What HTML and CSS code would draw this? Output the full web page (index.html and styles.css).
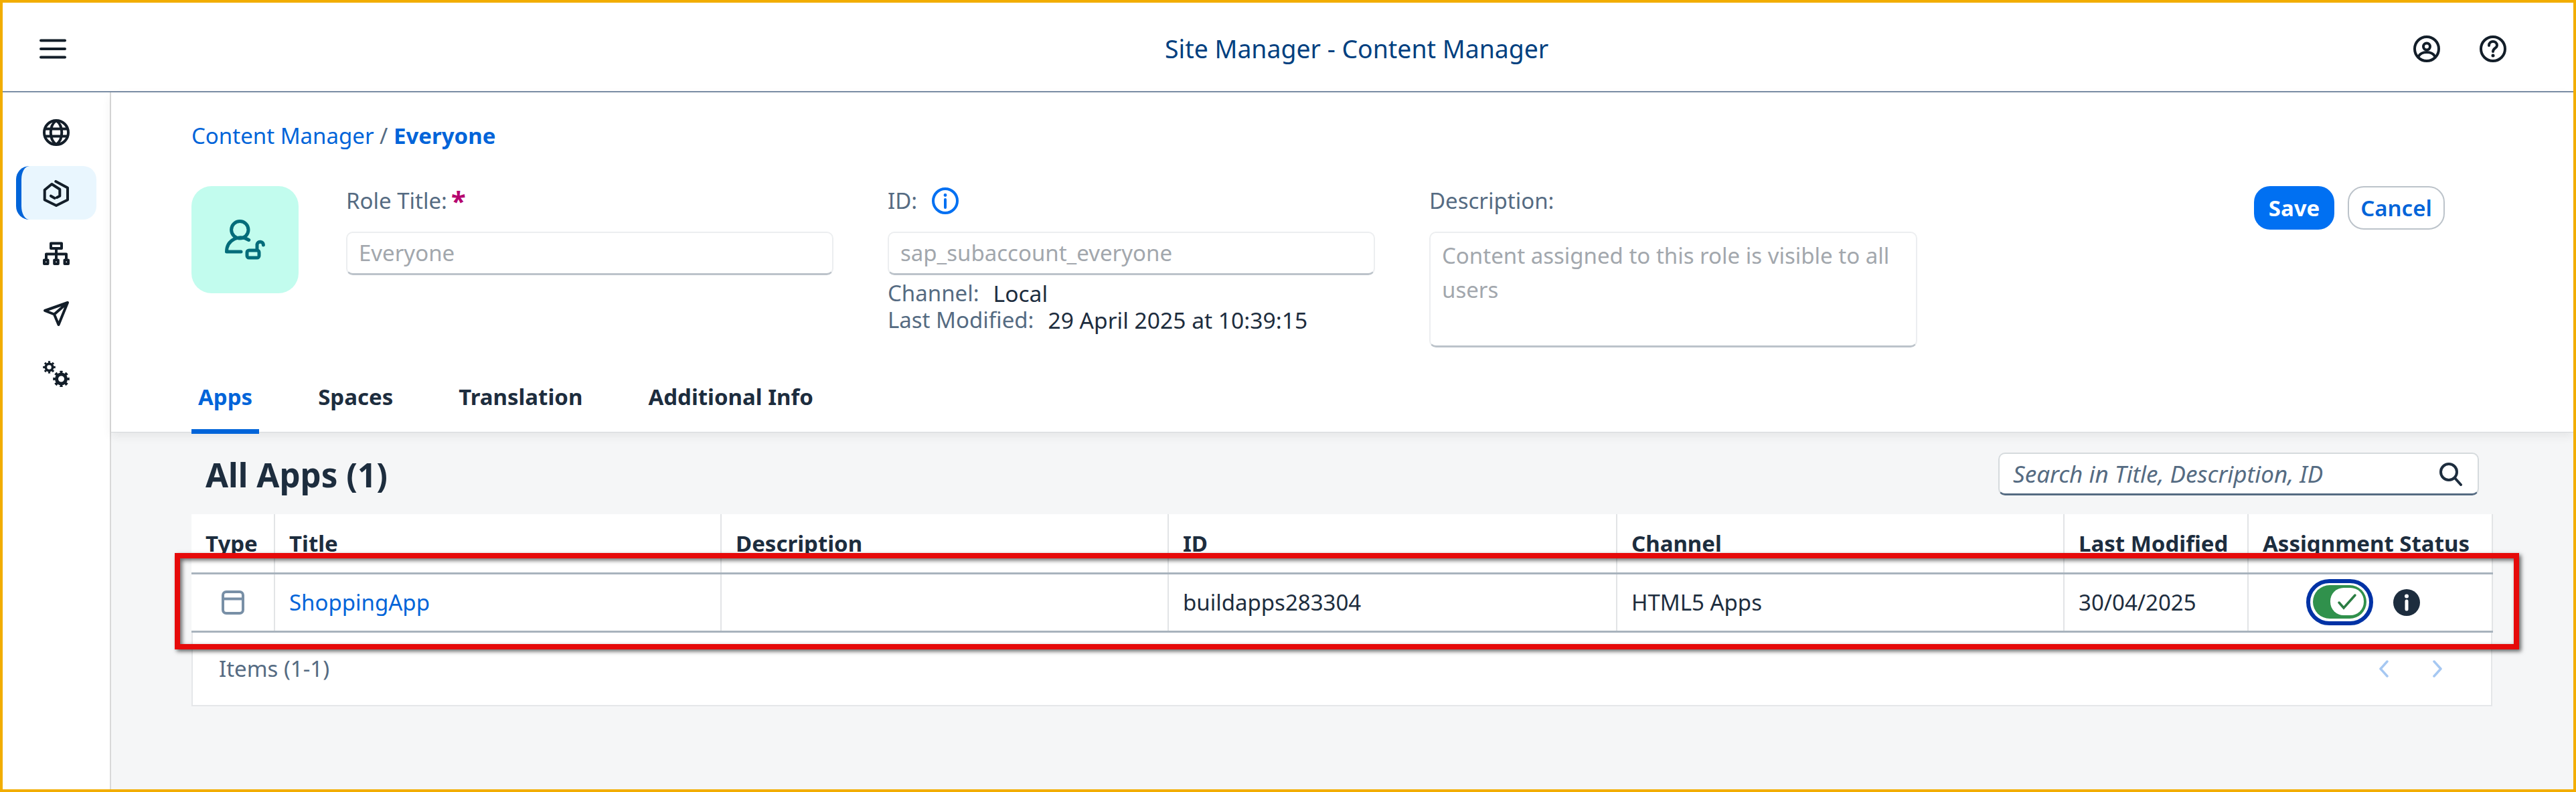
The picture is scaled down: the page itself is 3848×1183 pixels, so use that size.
FILE: index.html

```html
<!DOCTYPE html>
<html lang="en">
<head>
  <meta charset="UTF-8" />
  <title>Site Manager - Content Manager</title>
  <link rel="stylesheet" href="styles.css">
</head>
<body>
  <header class="shell-bar">
    <svg class="icon hamburger" viewBox="0 0 40 30"><path d="M2 2.5H38M2 15H38M2 27.5H38"/></svg>
    <div class="shell-title">Site Manager - Content Manager</div>
    <div class="shell-actions">
      <svg class="icon" viewBox="0 0 40 40"><circle cx="20" cy="20" r="18"/><circle cx="20" cy="16.5" r="5"/><path d="M7.5 31.5C10 27 15 25 20 25S30 27 32.5 31.5"/></svg>
      <svg class="icon" viewBox="0 0 40 40"><circle cx="20" cy="20" r="18"/><path d="M14 15c0-4 3-6 6-6s6 2 6 6c0 4-6 4-6 9"/><circle class="solid" cx="20" cy="30" r="2.5"/></svg>
    </div>
  </header>

  <div class="layout">
    <nav class="side-nav">
      <div class="nav-item">
        <svg class="icon" viewBox="0 0 40 40"><circle cx="20" cy="20" r="18"/><path d="M20 2C9 10 9 30 20 38C31 30 31 10 20 2ZM4 14.5H36M4 25.5H36"/></svg>
      </div>
      <div class="nav-item active">
        <svg class="icon" viewBox="0 0 40 40"><path d="M19.3 2L37 11.5V29.5L20 38L2.7 29.5V14.7L13.3 6L25.3 13.7V23.7L21 26M12 23.7L17.7 27"/></svg>
      </div>
      <div class="nav-item">
        <svg class="icon" viewBox="0 0 40 40"><path d="M12 5.5H28V13H12ZM20 13V29M5 29V21.5H35V29M2 30.5H7.5V36H2ZM17.2 30.5H22.8V36H17.2ZM32.5 30.5H38V36H32.5Z"/></svg>
      </div>
      <div class="nav-item">
        <svg class="icon" viewBox="0 0 40 40"><path d="M3 16L37 4L23.5 37L17 21.5ZM17 21.5L37 4"/></svg>
      </div>
      <div class="nav-item">
        <svg class="icon" viewBox="0 0 40 40">
          <circle class="gear-sm" cx="9.5" cy="10.5" r="5.2"/>
          <circle class="teeth-sm" cx="9.5" cy="10.5" r="7.7" pathLength="16"/>
          <circle class="gear-lg" cx="27.5" cy="28" r="7"/>
          <circle class="teeth-lg" cx="27.5" cy="28" r="10.3" pathLength="16"/>
        </svg>
      </div>
    </nav>

    <main class="main">
      <section class="role-header">
        <div class="breadcrumb">
          <span class="crumb">Content Manager</span><span class="crumb-sep"> / </span><span class="crumb-current">Everyone</span>
        </div>

        <div class="role-form">
          <div class="avatar">
            <svg viewBox="0 0 160 160" width="160" height="160"><circle cx="72.3" cy="65.3" r="12.7"/><path d="M85.7 80.5C78 76 70 76 64 79C56 83 52.5 90 52.5 98H74"/><rect x="83" y="96" width="18" height="11" rx="3"/><path d="M98 94V87a4.8 4.8 0 0 1 9.5 1"/></svg>
          </div>

          <div class="field">
            <div class="field-label">Role Title:<span class="required">*</span></div>
            <div class="field-input">Everyone</div>
          </div>

          <div class="field">
            <div class="field-label">ID:
              <svg class="info-outline" viewBox="0 0 40 40"><circle cx="20" cy="20" r="18"/><path d="M20 18V30"/><circle class="solid" cx="20" cy="11.5" r="2.4"/></svg>
            </div>
            <div class="field-input">sap_subaccount_everyone</div>
            <div class="meta-row"><span class="meta-label">Channel:</span><span class="meta-value">Local</span></div>
            <div class="meta-row"><span class="meta-label">Last Modified:</span><span class="meta-value">29 April 2025 at 10:39:15</span></div>
          </div>

          <div class="field">
            <div class="field-label">Description:</div>
            <div class="field-input textarea">Content assigned to this role is visible to all users</div>
          </div>

          <div class="role-actions">
            <button class="btn btn-primary">Save</button>
            <button class="btn btn-outline">Cancel</button>
          </div>
        </div>

        <div class="tabs">
          <div class="tab active">Apps</div>
          <div class="tab">Spaces</div>
          <div class="tab">Translation</div>
          <div class="tab">Additional Info</div>
        </div>
      </section>

      <section class="content">
        <div class="list-head">
          <h2>All Apps (1)</h2>
          <div class="search">
            <span>Search in Title, Description, ID</span>
            <svg class="search-icon" viewBox="0 0 36 36"><circle cx="15" cy="15" r="12"/><path d="M24 24L33 34"/></svg>
          </div>
        </div>

        <div class="table-wrap">
          <table class="apps-table">
            <colgroup>
              <col class="col-type"><col class="col-title"><col class="col-desc"><col class="col-id"><col class="col-channel"><col class="col-date"><col class="col-status">
            </colgroup>
            <thead>
              <tr>
                <th>Type</th><th>Title</th><th>Description</th><th>ID</th><th>Channel</th><th>Last Modified</th><th>Assignment Status</th>
              </tr>
            </thead>
            <tbody>
              <tr>
                <td><svg class="type-icon" viewBox="0 0 34 36"><rect x="2" y="2" width="30" height="32" rx="5"/><path d="M2 12.5H32"/></svg></td>
                <td class="link">ShoppingApp</td>
                <td></td>
                <td>buildapps283304</td>
                <td>HTML5 Apps</td>
                <td>30/04/2025</td>
                <td>
                  <div class="status-cell">
                    <div class="toggle"><div class="toggle-track"><div class="toggle-knob"><svg viewBox="0 0 32 26"><path d="M4 14L11 22L28 3"/></svg></div></div></div>
                    <svg class="info-solid" viewBox="0 0 40 40"><circle cx="20" cy="20" r="20"/><circle class="dot" cx="20" cy="10.5" r="3"/><path d="M20 18V30"/></svg>
                  </div>
                </td>
              </tr>
            </tbody>
          </table>
          <div class="table-foot">
            <span>Items (1-1)</span>
            <div class="pager">
              <svg viewBox="0 0 16 26"><path d="M13 2L3 13L13 24"/></svg>
              <svg viewBox="0 0 16 26"><path d="M3 2L13 13L3 24"/></svg>
            </div>
          </div>
        </div>
      </section>
    </main>
  </div>

  <div class="highlight"></div>
</body>
</html>
```

FILE: styles.css

```css
* {
  box-sizing: border-box;
}

html, body {
  margin: 0;
  padding: 0;
}

body {
  position: relative;
  width: 3848px;
  height: 1183px;
  overflow: hidden;
  border: 4px solid #f2ad00;
  background-color: #fff;
  color: #1d2d3e;
  font-family: "Noto Sans", sans-serif;
  font-size: 33px;
  display: flex;
  flex-direction: column;
}

.icon {
  width: 40px;
  height: 40px;
  fill: none;
  stroke: #131e29;
  stroke-width: 4;
  stroke-linecap: round;
  stroke-linejoin: round;
}

.icon .solid {
  fill: #131e29;
  stroke: none;
}

.icon .gear-sm {
  stroke-width: 3.8;
}

.icon .gear-lg {
  stroke-width: 5;
}

.icon .teeth-sm {
  stroke-width: 3.2;
  stroke-linecap: butt;
  stroke-dasharray: 1;
  stroke-dashoffset: 0.5;
}

.icon .teeth-lg {
  stroke-width: 4;
  stroke-linecap: butt;
  stroke-dasharray: 1;
  stroke-dashoffset: 0.5;
}

/* top bar */
.shell-bar {
  height: 134px;
  flex: none;
  padding-top: 5px;
  display: flex;
  align-items: center;
  border-bottom: 2px solid #7b8ea5;
}

.hamburger {
  width: 40px;
  height: 30px;
  margin-left: 55px;
}

.shell-title {
  margin-left: 1641px;
  font-size: 37.4px;
  color: #00407f;
}

.shell-actions {
  margin-left: auto;
  margin-right: 100px;
  display: flex;
  gap: 59px;
}

/* sidebar */
.layout {
  flex: 1;
  display: flex;
  min-height: 0;
}

.side-nav {
  width: 162px;
  flex: none;
  border-right: 2px solid #d9d9d9;
  padding: 20px 0 0 20px;
  display: flex;
  flex-direction: column;
  gap: 10px;
}

.nav-item {
  width: 120px;
  height: 80px;
  display: flex;
  align-items: center;
  justify-content: center;
  border-radius: 20px;
}

.nav-item.active {
  background-color: #e9f6fe;
  border-left: 8px solid #0064d9;
  padding-right: 8px;
  padding-top: 2px;
}

/* role header */
.main {
  flex: 1;
  min-width: 0;
  display: flex;
  flex-direction: column;
  background-color: #f5f6f7;
}

.role-header {
  position: relative;
  height: 507px;
  flex: none;
  padding: 43px 0 0 120px;
  background-color: #fff;
  box-shadow: 0 1px 0 #d5d8db, 0 6px 14px rgba(0, 0, 0, 0.07);
}

.breadcrumb {
  line-height: 44px;
  color: #556b82;
}

.crumb {
  color: #0064d9;
}

.crumb-current {
  color: #0064d9;
  font-weight: 700;
}

.role-form {
  display: flex;
  margin-top: 53px;
}

.avatar {
  width: 160px;
  height: 160px;
  flex: none;
  border-radius: 30px;
  background-color: #c2fcee;
  margin-right: 71px;
}

.avatar svg {
  fill: none;
  stroke: #046c7a;
  stroke-width: 5;
  stroke-linecap: round;
  stroke-linejoin: round;
}

.field {
  width: 728px;
  flex: none;
  margin-right: 81px;
}

.field-label {
  height: 44px;
  line-height: 40px;
  margin-bottom: 24px;
  color: #556b82;
  display: flex;
  align-items: center;
  gap: 6px;
}

.required {
  color: #b5006e;
  font-weight: 700;
  font-size: 40px;
}

.field-input {
  height: 65px;
  padding: 0 17px;
  line-height: 60px;
  color: #a2a7ad;
  background-color: #fff;
  border: 2px solid #eceef0;
  border-bottom: 3px solid #bcc3ca;
  border-radius: 10px;
}

.field-input.textarea {
  width: 729px;
  height: 173px;
  padding-top: 8px;
  line-height: 51px;
}

.info-outline {
  width: 40px;
  height: 40px;
  margin-left: 16px;
  fill: none;
  stroke: #0070f2;
  stroke-width: 4;
  stroke-linecap: round;
}

.info-outline .solid {
  fill: #0070f2;
  stroke: none;
}

.meta-row {
  height: 40px;
  line-height: 40px;
  display: flex;
  gap: 21px;
}

.field-input + .meta-row {
  margin-top: 7px;
}

.meta-label {
  color: #556b82;
}

.meta-value {
  font-size: 33.6px;
}

.role-actions {
  margin-left: 423px;
  display: flex;
  gap: 20px;
}

.btn {
  height: 65px;
  border-radius: 24px;
  font-family: inherit;
  font-size: 33px;
  padding: 0;
}

.btn-primary {
  width: 120px;
  border: none;
  background-color: #0070f2;
  color: #fff;
  font-weight: 700;
}

.btn-outline {
  width: 145px;
  border: 2px solid #bcc3ca;
  background-color: #fff;
  color: #0064d9;
  font-weight: 600;
}

/* tabs */
.tabs {
  position: absolute;
  left: 120px;
  bottom: -3px;
  display: flex;
  gap: 78px;
}

.tab {
  height: 103px;
  padding: 0 10px 7px;
  line-height: 96px;
  font-weight: 700;
  border-bottom: 7px solid transparent;
}

.tab.active {
  color: #0064d9;
  border-bottom-color: #0064d9;
}

/* list */
.content {
  padding: 31px 121px 0 120px;
}

.list-head {
  display: flex;
  justify-content: space-between;
  align-items: center;
  height: 64px;
  padding: 0 20px 0 21px;
}

h2 {
  margin: 0;
  font-size: 49.3px;
  font-weight: 700;
}

.search {
  width: 718px;
  height: 64px;
  padding: 0 22px 0 20px;
  display: flex;
  align-items: center;
  justify-content: space-between;
  background-color: #fff;
  border: 2px solid #d5dadd;
  border-bottom: 3px solid #556b82;
  border-radius: 10px;
  font-size: 35px;
  font-style: italic;
  color: #556b82;
}

.search-icon {
  width: 36px;
  height: 36px;
  fill: none;
  stroke: #1d2d3e;
  stroke-width: 4;
  stroke-linecap: round;
}

.table-wrap {
  margin-top: 28px;
  background-color: #fff;
}

.apps-table {
  width: 3437px;
  table-layout: fixed;
  border-collapse: collapse;
}

.col-type { width: 124px; }
.col-title { width: 667px; }
.col-desc { width: 668px; }
.col-id { width: 670px; }
.col-channel { width: 668px; }
.col-date { width: 275px; }
.col-status { width: 365px; }

.apps-table th,
.apps-table td {
  padding: 0 0 0 21px;
  text-align: left;
  border-right: 2px solid #e2e4e6;
}

.apps-table th {
  height: 88px;
  font-weight: 700;
  border-bottom: 3px solid #a8b3bd;
}

.apps-table td {
  height: 87px;
  border-bottom: 3px solid #a8b3bd;
}

.link {
  color: #0064d9;
}

.type-icon {
  display: block;
  width: 34px;
  height: 36px;
  margin-left: 24px;
  fill: none;
  stroke: #788fa6;
  stroke-width: 4;
}

.status-cell {
  display: flex;
  align-items: center;
  padding-left: 65px;
}

.toggle {
  width: 100px;
  height: 69px;
  padding: 4px;
  border: 6px solid #0032a5;
  border-radius: 35px;
  background-color: #fff;
}

.toggle-track {
  width: 80px;
  height: 50px;
  margin: -1px 0 0 0;
  padding: 4px 4px 4px 26px;
  background-color: #30914c;
  border-radius: 25px;
}

.toggle-knob {
  width: 50px;
  height: 41px;
  display: flex;
  align-items: center;
  justify-content: center;
  background-color: #fff;
  border-radius: 20px;
}

.toggle-knob svg {
  width: 32px;
  height: 26px;
  fill: none;
  stroke: #2b7d43;
  stroke-width: 3.5;
  stroke-linecap: round;
}

.info-solid {
  width: 40px;
  height: 40px;
  margin-left: 30px;
  fill: #1d2d3e;
}

.info-solid .dot {
  fill: #fff;
}

.info-solid path {
  stroke: #fff;
  stroke-width: 5;
  stroke-linecap: round;
}

.table-foot {
  height: 110px;
  width: 3437px;
  padding: 0 0 0 39px;
  display: flex;
  align-items: center;
  justify-content: space-between;
  border: 2px solid #e5e7e9;
  border-top: none;
  color: #556b82;
}

.pager {
  display: flex;
  gap: 64px;
  margin-right: 72px;
}

.pager svg {
  width: 16px;
  height: 26px;
  fill: none;
  stroke: #a6c8f2;
  stroke-width: 3.5;
  stroke-linecap: round;
  stroke-linejoin: round;
}

/* red annotation box drawn over the screenshot */
.highlight {
  position: absolute;
  left: 257px;
  top: 822px;
  width: 3502px;
  height: 144px;
  border: 8px solid #e60a0a;
  box-shadow: 3px 3px 6px rgba(0, 0, 0, 0.6), inset 3px 3px 6px rgba(0, 0, 0, 0.6);
}
```
